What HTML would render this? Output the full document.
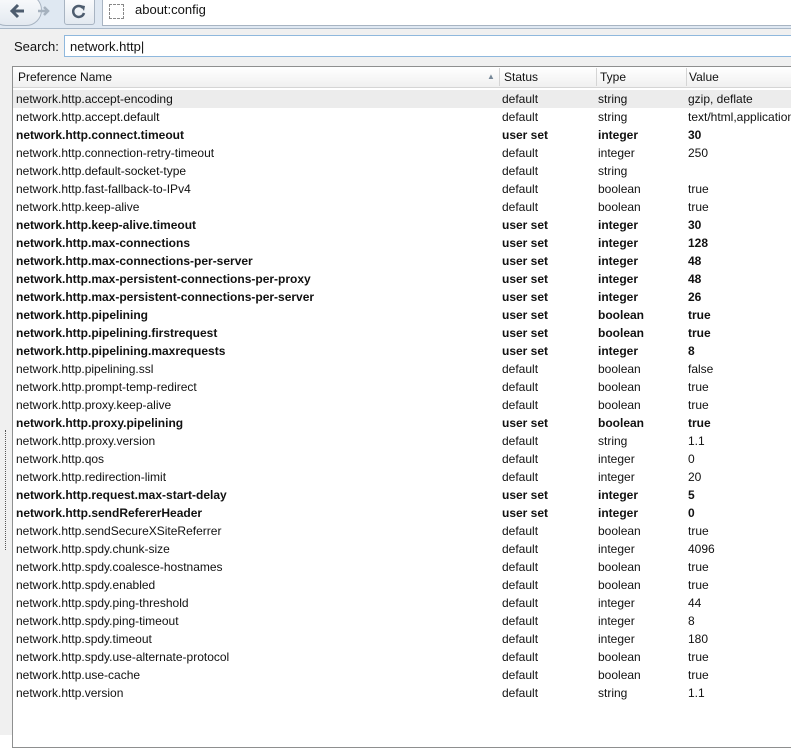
<!DOCTYPE html>
<html><head><style>
body{margin:0;width:791px;height:735px;overflow:hidden;background:#fff;font-family:"Liberation Sans",sans-serif;font-size:12px;color:#111;position:relative}
#tb{position:absolute;left:0;top:0;width:791px;height:28px;background:#dfe8f2;border-bottom:1px solid #a9b8c8;overflow:hidden}
#content{position:absolute;left:0;top:29px;width:791px;height:706px;background:#f0f0f0}
.btn{position:absolute;background:linear-gradient(#fbfcfd,#e3e9f0);border:1px solid #a8b4c2}
#url{position:absolute;left:102px;top:-2px;width:700px;height:26px;background:#fff;border:1px solid #a8b4c2;font-size:13px}
#search{position:absolute;left:64px;top:35px;width:727px;height:22px;background:#fff;border:1px solid #8fb8dd;border-right:none;font-size:13px;line-height:22px;padding-left:5px;box-sizing:border-box}
#tbl{position:absolute;left:12px;top:66px;width:778px;height:680px;background:#fff;border:1px solid #8e8f8f;border-right:none;overflow:hidden}
#hdr{position:absolute;left:0;top:0;width:778px;height:20px;background:linear-gradient(#fff,#f0f0f0);border-bottom:1px solid #d5d5d5}
#hdr span{position:absolute;top:3px}
.sep{position:absolute;top:1px;width:1px;height:18px;background:#d5d5d5}
.r{position:absolute;left:0;width:778px;height:18px;line-height:18px;overflow:hidden}
.r span{position:absolute;top:0;white-space:nowrap}
.b{font-weight:bold}
</style></head><body>
<div id="tb">
<div class="btn" style="left:-10px;top:-6px;width:50px;height:30px;border-radius:16px"></div>
<svg style="position:absolute;left:8px;top:2px" width="50" height="20"><path d="M16 9H5M10 3L4 9l6 6" stroke="#4d5c6e" stroke-width="3" fill="none"/><path d="M30 9h10M36 5l4 4-4 4" stroke="#a5b1be" stroke-width="2.5" fill="none"/></svg>
<div class="btn" style="left:64px;top:-3px;width:29px;height:26px;border-radius:3px"></div>
<svg style="position:absolute;left:71px;top:3px" width="16" height="16"><path d="M12 5A5.5 5.5 0 1 0 13 10" stroke="#4d5c6e" stroke-width="2.5" fill="none"/><path d="M9 2l5 1-1 5z" fill="#4d5c6e"/></svg>
<div id="url"><div style="position:absolute;left:6px;top:5px;width:13px;height:13px;border:1px dashed #888"></div><span style="position:absolute;left:32px;top:3px">about:config</span></div>
</div>
<div id="content">
<span style="position:absolute;left:14px;top:10px;font-size:13px">Search:</span>
</div>
<div id="search">network.http|</div>
<div id="tbl">
<div id="hdr"><span style="left:5px">Preference Name</span><span style="left:474px;font-size:8px;color:#789;top:5px">▲</span><div class="sep" style="left:486px"></div><span style="left:491px">Status</span><div class="sep" style="left:583px"></div><span style="left:587px">Type</span><div class="sep" style="left:673px"></div><span style="left:676px">Value</span></div>
<div id="rows"></div>
</div>
<div style="position:absolute;left:5px;top:430px;height:120px;border-left:1px dotted #555"></div>
<script>
var d=[["accept-encoding",0,"string","gzip, deflate"],["accept.default",0,"string","text/html,application/xhtml+xml"],["connect.timeout",1,"integer","30"],["connection-retry-timeout",0,"integer","250"],["default-socket-type",0,"string",""],["fast-fallback-to-IPv4",0,"boolean","true"],["keep-alive",0,"boolean","true"],["keep-alive.timeout",1,"integer","30"],["max-connections",1,"integer","128"],["max-connections-per-server",1,"integer","48"],["max-persistent-connections-per-proxy",1,"integer","48"],["max-persistent-connections-per-server",1,"integer","26"],["pipelining",1,"boolean","true"],["pipelining.firstrequest",1,"boolean","true"],["pipelining.maxrequests",1,"integer","8"],["pipelining.ssl",0,"boolean","false"],["prompt-temp-redirect",0,"boolean","true"],["proxy.keep-alive",0,"boolean","true"],["proxy.pipelining",1,"boolean","true"],["proxy.version",0,"string","1.1"],["qos",0,"integer","0"],["redirection-limit",0,"integer","20"],["request.max-start-delay",1,"integer","5"],["sendRefererHeader",1,"integer","0"],["sendSecureXSiteReferrer",0,"boolean","true"],["spdy.chunk-size",0,"integer","4096"],["spdy.coalesce-hostnames",0,"boolean","true"],["spdy.enabled",0,"boolean","true"],["spdy.ping-threshold",0,"integer","44"],["spdy.ping-timeout",0,"integer","8"],["spdy.timeout",0,"integer","180"],["spdy.use-alternate-protocol",0,"boolean","true"],["use-cache",0,"boolean","true"],["version",0,"string","1.1"]];
var h="";d.forEach(function(r,i){h+='<div class="r'+(r[1]?' b':'')+'" style="top:'+(23+i*18)+'px;'+(i==0?'background:#ececec':'')+'"><span style="left:3px">network.http.'+r[0]+'</span><span style="left:489px">'+(r[1]?'user set':'default')+'</span><span style="left:585px">'+r[2]+'</span><span style="left:675px">'+r[3]+'</span></div>';});
document.getElementById("rows").innerHTML=h;
</script>
</body></html>
